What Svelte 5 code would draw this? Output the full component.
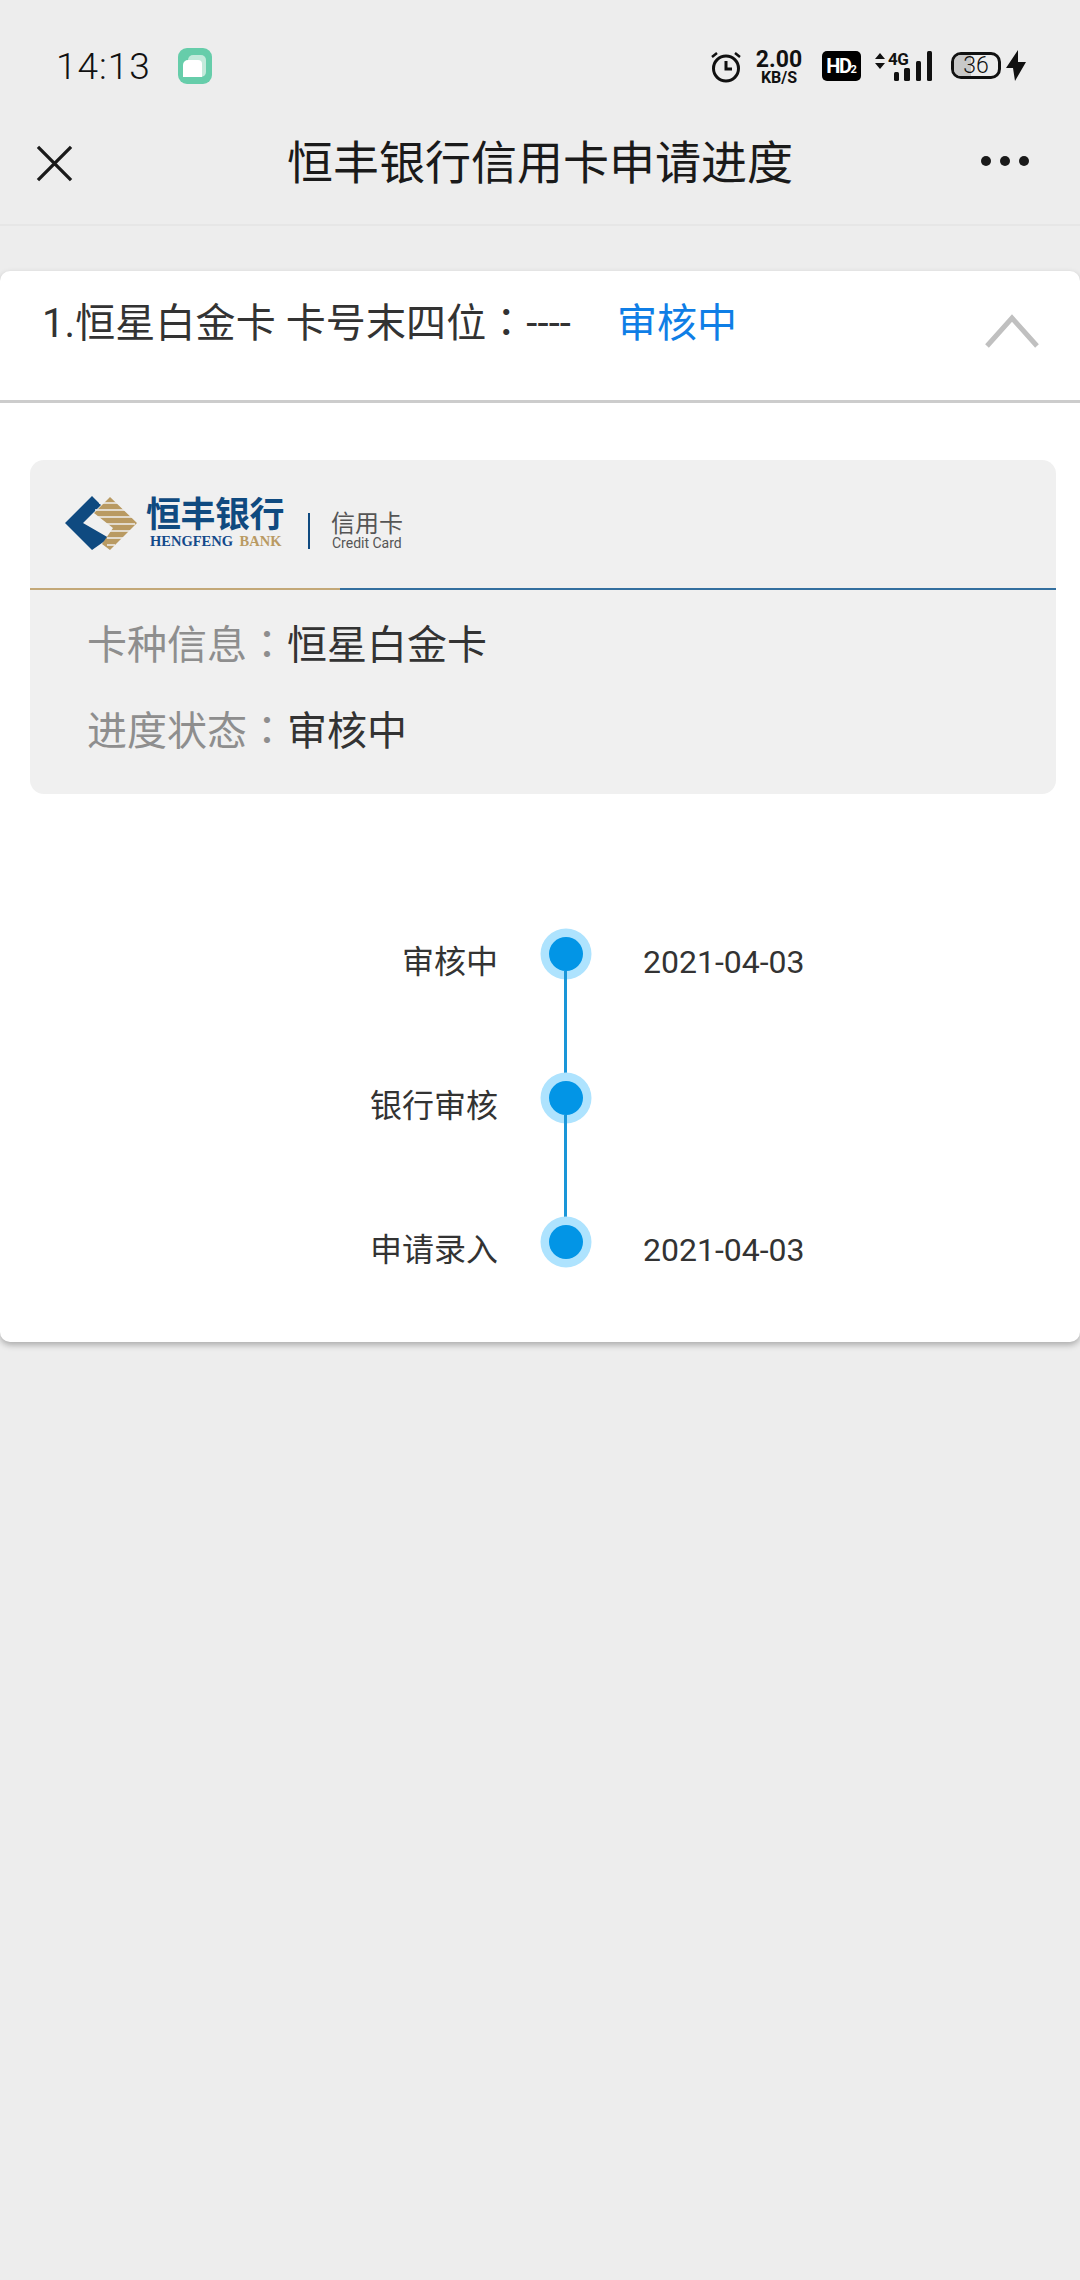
<script lang="ts">
  const steps = [
    { label: '审核中', date: '2021-04-03' },
    { label: '银行审核', date: '' },
    { label: '申请录入', date: '2021-04-03' },
  ];
  const info = [
    { key: '卡种信息', value: '恒星白金卡' },
    { key: '进度状态', value: '审核中' },
  ];
</script>

<div class="page">
  <div class="status">
    <span class="clock">14:13</span>
    <svg class="app-icon" width="36" height="36" viewBox="0 0 34 36">
      <rect width="34" height="36" rx="9" fill="#66cdaa" />
      <rect x="10" y="7" width="18" height="22" rx="5" fill="#c3eadb" />
      <path d="M10 12h10a4 4 0 0 1 4 4v13H5V17a5 5 0 0 1 5-5z" fill="#fff" />
    </svg>
    <div class="status-right">
      <svg class="alarm" width="31" height="32" viewBox="0 0 31 32" fill="none" stroke="#111">
        <circle cx="15" cy="17.5" r="12.5" stroke-width="3" />
        <path d="M15 10v8h6" stroke-width="3" />
        <path d="M1 6l5-4M29 6l-5-4" stroke-width="2.5" />
      </svg>
      <div class="speed">
        <span class="speed-num">2.00</span>
        <span class="speed-unit">KB/S</span>
      </div>
      <div class="hd">HD<small>2</small></div>
      <div class="net">
        <svg class="arrows" width="10" height="16" viewBox="0 0 10 16">
          <path d="M5 0l5 6H0zM5 16l5-6H0z" fill="#111" />
        </svg>
        <span class="net-label">4G</span>
        <svg class="bars" width="39" height="30" viewBox="0 0 39 30">
          <rect x="0" y="21" width="5" height="9" rx="1.5" />
          <rect x="10" y="17" width="6" height="13" rx="1.5" />
          <rect x="22" y="10" width="5" height="20" rx="1.5" />
          <rect x="33" y="0" width="5" height="30" rx="1.5" />
        </svg>
      </div>
      <div class="battery">
        <span class="battery-fill"></span>
        <span class="battery-num">36</span>
      </div>
      <svg class="bolt" width="20" height="31" viewBox="0 0 20 31">
        <path d="M12 0L0 18h7L9 31 20 12h-8z" fill="#111" />
      </svg>
    </div>
  </div>

  <header class="nav">
    <svg class="close" width="37" height="37" viewBox="0 0 38 38" fill="none" stroke="#1a1a1a" stroke-width="3.4">
      <path d="M2 2l34 34M36 2L2 36" />
    </svg>
    <h1>恒丰银行信用卡申请进度</h1>
    <div class="more"><i></i><i></i><i></i></div>
  </header>

  <section class="card">
    <div class="card-head">
      <span class="card-title">1.恒星白金卡 卡号末四位<span class="colon">：</span>----</span>
      <span class="card-state">审核中</span>
      <svg class="chevron" width="56" height="34" viewBox="0 0 56 34" fill="none" stroke="#c0c0c0" stroke-width="5">
        <path d="M3 32L28 4l25 28" />
      </svg>
    </div>

    <div class="card-body">
      <div class="bank">
        <div class="logo">
          <svg class="mark" width="74" height="54" viewBox="0 0 74 54">
            <path d="M0 27L27 0l9 9-18 18 26 15-17 12z" fill="#0f4a80" />
            <path d="M45 1l27 26-27 27-8-6 11-16-19-15z" fill="#b99a62" />
            <path d="M34 7h24M30 14h34M31 21h38M34 28h36M43 35h22M42 42h16M42 49h8" stroke="#f0f0f0" stroke-width="1.6" />
          </svg>
          <div class="logo-name">
            <span class="logo-cn">恒丰银行</span>
            <span class="logo-en">HENGFENG <em>BANK</em></span>
          </div>
          <span class="logo-sep"></span>
          <div class="logo-sub">
            <span class="logo-sub-cn">信用卡</span>
            <span class="logo-sub-en">Credit Card</span>
          </div>
        </div>
        <div class="rule"><span></span></div>
        <div class="info">
          {#each info as row}
            <div class="info-row"><span class="info-key">{row.key}<span class="colon">：</span></span><span>{row.value}</span></div>
          {/each}
        </div>
      </div>

      <div class="timeline">
        {#each steps as step, i}
          <div class="step">
            <span class="step-label">{step.label}</span>
            <div class="step-track">
              <span class="dot"></span>
              {#if i < steps.length - 1}<span class="line"></span>{/if}
            </div>
            <span class="step-date">{step.date}</span>
          </div>
        {/each}
      </div>
    </div>
  </section>
</div>

<style>
  :global(body) {
    margin: 0;
    background: #ececec;
    font-family: Roboto, "Noto Sans CJK SC", sans-serif;
  }
  .page { min-height: 2280px; background: #ededed; color: #333; }
  .colon { font-family: "Noto Sans CJK TC", sans-serif; line-height: 0; }

  .status { height: 90px; display: flex; align-items: flex-start; box-sizing: border-box; padding: 48px 54px 0 56px; }
  .clock { font-size: 37px; line-height: 36px; font-weight: 300; color: #111; letter-spacing: 1px; width: 121px; margin-top: 1px; }
  .status-right { margin-left: auto; display: flex; align-items: flex-start; margin-top: 2px; }
  .alarm { margin-top: 1px; }
  .speed { width: 48px; margin-left: 13px; display: flex; flex-direction: column; align-items: center; color: #111; font-weight: 700; }
  .speed-num { font-size: 23px; line-height: 20px; }
  .speed-unit { font-size: 16px; line-height: 14px; margin-top: 1px; }
  .hd {
    width: 39px; height: 30px; margin-left: 19px; margin-top: 1px; background: #000; color: #fff; border-radius: 5px;
    font-size: 20px; line-height: 30px; font-weight: 700; text-align: center; letter-spacing: -1.5px;
  }
  .hd small { font-size: 11px; letter-spacing: 0; }
  .net { width: 58px; height: 31px; margin-left: 14px; display: flex; align-items: flex-start; }
  .arrows { flex: none; margin-top: 3px; }
  .net-label { flex: none; width: 0; font-size: 17px; line-height: 17px; font-weight: 700; color: #111; letter-spacing: -0.5px; margin-top: 1px; margin-left: 3px; white-space: nowrap; }
  .bars { flex: none; margin-left: 6px; margin-top: 1px; fill: #111; }
  .battery {
    position: relative; width: 50px; height: 27px; box-sizing: border-box; margin-left: 18px; margin-top: 2px;
    border: 3px solid #111; border-radius: 10px; overflow: hidden;
    display: flex; align-items: center; justify-content: center;
  }
  .battery-fill { position: absolute; left: 0; top: 0; bottom: 0; width: 17px; background: #c8c8c8; }
  .battery-num { position: relative; font-size: 23px; line-height: 21px; font-weight: 300; color: #111; }
  .bolt { margin-left: 5px; }

  .nav {
    height: 136px; box-sizing: border-box; border-bottom: 2px solid #e6e6e6;
    display: grid; grid-template-columns: 1fr auto 1fr; align-items: center; padding: 12px 36px 0;
  }
  h1 { margin: 0; text-align: center; font-size: 46px; line-height: 60px; font-weight: 400; color: #1a1a1a; }
  .more { display: flex; gap: 9px; justify-self: end; margin: -4px 15px 0 0; }
  .more i { width: 10px; height: 10px; border-radius: 50%; background: #1a1a1a; }

  .card { margin-top: 45px; height: 1071px; background: #fff; border-radius: 10px; box-shadow: 0 3px 6px rgba(0, 0, 0, 0.28); }
  .card-head {
    height: 132px; box-sizing: border-box; border-bottom: 3px solid #ccc;
    display: flex; align-items: flex-start; padding: 30px 0 0 42px;
  }
  .card-title { font-size: 40px; line-height: 46px; color: #333; letter-spacing: 0.1px; }
  .card-state { font-size: 40px; line-height: 46px; color: #0f7ee6; margin-left: 46px; }
  .chevron { margin-left: auto; margin-right: 40px; margin-top: 13px; }

  .card-body { padding-top: 57px; }
  .bank { margin: 0 24px 0 30px; height: 334px; background: #f0f0f0; border-radius: 14px; overflow: hidden; }
  .logo { height: 128px; box-sizing: border-box; display: flex; align-items: flex-start; padding: 36px 0 0 35px; }
  .mark { flex: none; }
  .logo-name { margin-left: 7px; display: flex; flex-direction: column; margin-top: -2px; }
  .logo-cn { font-size: 35px; line-height: 44px; font-weight: 700; color: #0f4a80; letter-spacing: -0.5px; width: 140px; white-space: nowrap; }
  .logo-en { font-family: "Liberation Serif", serif; font-size: 14.5px; line-height: 14px; font-weight: 700; color: #13498a; white-space: nowrap; margin-left: 4px; margin-top: -4px; }
  .logo-en em { font-style: normal; color: #b99a62; margin-left: 3px; }
  .logo-sep { width: 2px; height: 36px; background: #0f4a80; margin-left: 22px; margin-top: 17px; }
  .logo-sub { margin-left: 21px; margin-top: 15px; display: flex; flex-direction: column; color: #555; }
  .logo-sub-cn { font-size: 24px; line-height: 26px; white-space: nowrap; }
  .logo-sub-en { font-size: 14px; line-height: 13px; white-space: nowrap; margin-left: 1px; }
  .rule { height: 2px; background: #336f9f; }
  .rule span { display: block; width: 310px; height: 2px; background: #c3a878; }
  .info { padding: 29px 0 0 57px; }
  .info-row { font-size: 40px; line-height: 54px; height: 86px; color: #333; white-space: nowrap; }
  .info-key { color: #8e8e8e; }

  .timeline { padding-top: 134px; }
  .step { display: flex; height: 144px; align-items: flex-start; }
  .step-label, .step-date { font-size: 32px; line-height: 50px; margin-top: 9px; color: #333; white-space: nowrap; }
  .step-label { width: 498px; text-align: right; }
  .step-track { width: 51px; height: 144px; margin-left: 42px; display: flex; flex-direction: column; align-items: center; }
  .dot { flex: none; width: 34px; height: 34px; margin-top: 8.5px; border-radius: 50%; background: #0295e6; box-shadow: 0 0 0 8.5px #aee3fe; }
  .line { flex: 1; width: 3px; margin-bottom: -9px; background: #1a96d8; }
  .step-date { margin-left: 52px; }
</style>
